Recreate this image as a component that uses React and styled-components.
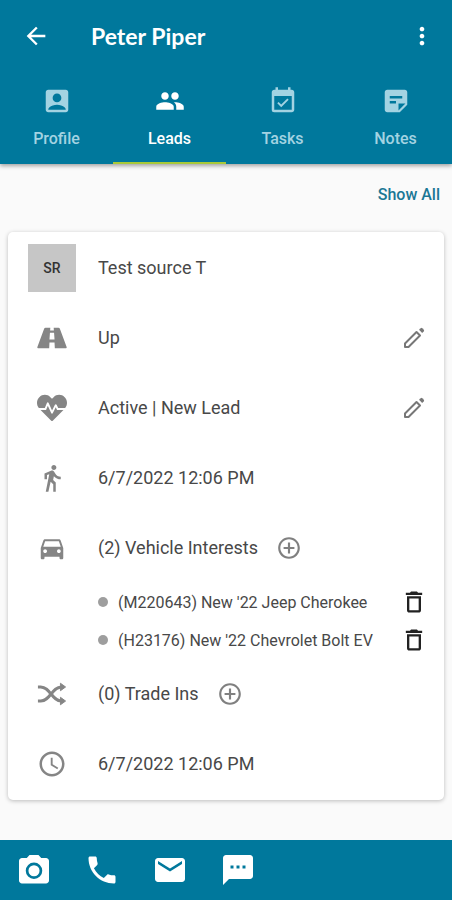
import styled, { createGlobalStyle } from 'styled-components'
import {
    MdAccessTime,
    MdAccountBox,
    MdAddCircleOutline,
    MdArrowBack,
    MdDeleteOutline,
    MdDirectionsCar,
    MdDirectionsWalk,
    MdEmail,
    MdEventAvailable,
    MdMoreVert,
    MdPeople,
    MdPhone,
    MdStickyNote2,
    MdTextsms,
} from 'react-icons/md'
import { FaHeartbeat } from 'react-icons/fa'

const GlobalStyle = createGlobalStyle`
    * {
        box-sizing: border-box;
    }

    body {
        margin: 0;
        background-color: #fafafa;
        font-family: Roboto, 'Liberation Sans', sans-serif;
        color: #484848;
    }
`;

const LeadPage = styled.div`
    min-height: 100vh;
    display: flex;
    flex-flow: column nowrap;
`;

const IconButton = styled.button`
    border: 0;
    padding: 0;
    background: none;
    display: flex;
    color: ${props => props.$color || '#ffffff'};
    font-size: ${props => props.$size || 28}px;
    cursor: pointer;
`;

// ---- Header ----

const Header = styled.header`
    background-color: #00789c;
    box-shadow: 0 2px 4px rgba(0, 0, 0, 0.35);
`;

const TitleBar = styled.div`
    height: 72px;
    padding: 0 16px 0 22px;
    display: flex;
    align-items: center;
`;

const Title = styled.h1`
    flex: 1;
    margin: 0;
    padding-left: 41px;
    font-family: Lato, sans-serif;
    font-size: 23px;
    font-weight: 700;
    color: #ffffff;
`;

const Tabs = styled.nav`
    display: flex;
`;

const Tab = styled.button`
    flex: 1;
    height: 92px;
    padding: 14px 0 0;
    border: 0;
    border-bottom: 2px solid ${props => (props.$active ? '#a9c938' : 'transparent')};
    background: none;
    display: flex;
    flex-flow: column nowrap;
    align-items: center;
    gap: 12px;
    font-family: inherit;
    font-size: 16px;
    line-height: 22px;
    font-weight: 500;
    color: ${props => (props.$active ? '#ffffff' : '#a3d3e2')};
    cursor: pointer;

    svg {
        font-size: 30px;
    }
`;

// ---- Lead card ----

const Content = styled.main`
    flex: 1;
    padding: 20px 8px 40px;
`;

const ShowAll = styled.a`
    display: block;
    width: fit-content;
    margin: 0 4px 26px auto;
    font-size: 16px;
    line-height: 22px;
    font-weight: 500;
    color: #1b7795;
    text-decoration: none;
`;

const Card = styled.section`
    padding: 1px 0;
    border-radius: 5px;
    background-color: #ffffff;
    box-shadow: 0 1px 4px rgba(0, 0, 0, 0.25);
`;

const Row = styled.div`
    height: 70px;
    padding: 0 16px 0 20px;
    display: flex;
    align-items: center;
`;

const RowIcon = styled.div`
    flex: 0 0 48px;
    display: flex;
    justify-content: center;
    color: #858585;
    font-size: 30px;
`;

const SourceBadge = styled.div`
    width: 48px;
    height: 48px;
    background-color: #c6c6c6;
    display: flex;
    justify-content: center;
    align-items: center;
    font-size: 14px;
    font-weight: 500;
    color: #333333;
`;

const RowText = styled.div`
    flex: 1;
    margin-left: 22px;
    display: flex;
    align-items: center;
    gap: 18px;
    font-size: 18px;
    line-height: 20px;
`;

const VehicleList = styled.ul`
    margin: 0;
    padding: 0 16px 0 90px;
    list-style: none;
`;

const Vehicle = styled.li`
    height: 38px;
    display: flex;
    align-items: center;
    gap: 10px;
    font-size: 16px;

    &::before {
        content: '';
        width: 10px;
        height: 10px;
        border-radius: 50%;
        background-color: #9e9e9e;
    }
`;

const VehicleName = styled.span`
    flex: 1;
`;

// ---- Footer ----

const Footer = styled.footer`
    height: 60px;
    padding: 0 16px;
    background-color: #00789c;
    display: flex;
    align-items: center;
    gap: 32px;
`;

// ---- Icons ----

const CameraIcon = () => (
    <svg width="1em" height="1em" viewBox="0 0 24 24" fill="currentColor">
        <path
            fillRule="evenodd"
            d="M9 2 7.2 4H4c-1.1 0-2 .9-2 2v13c0 1.1.9 2 2 2h16c1.1 0 2-.9 2-2V6c0-1.1-.9-2-2-2h-3.2L15 2H9zm3 5a5.5 5.5 0 1 1 0 11 5.5 5.5 0 0 1 0-11zm0 1.8a3.7 3.7 0 1 0 0 7.4 3.7 3.7 0 0 0 0-7.4z"
        />
    </svg>
)

const RoadIcon = () => (
    <svg width="1em" height="1em" viewBox="0 0 32 32" fill="currentColor">
        <path
            fillRule="evenodd"
            d="M9 5H14.2L14 8H18L17.800 5H23Q24 5 24.400 6L31.600 25.500Q32 27 30.800 27H19L18.700 20.800H13.300L13 27H1.200Q0 27 .4 25.500L7.600 6Q8 5 9 5ZM13.800 10.500 13.300 17.500H18.700L18.200 10.500Z"
        />
    </svg>
)

const ShuffleIcon = () => (
    <svg width="1em" height="1em" viewBox="0 0 32 32" fill="none">
        <path
            d="M1 8.500H4C14 8.500 16 23.500 26 23.500M1 23.500H4C14 23.500 16 8.500 26 8.500"
            stroke="currentColor"
            strokeWidth="3.2"
        />
        <path
            d="M25 4.500 30.500 8.500 25 12.500ZM25 19.500 30.500 23.500 25 27.500Z"
            fill="currentColor"
            stroke="currentColor"
            strokeWidth="1"
            strokeLinejoin="round"
        />
    </svg>
)

const PencilIcon = () => (
    <svg width="1em" height="1em" viewBox="0 0 28 28" fill="none">
        <path
            d="M5 23V19.500L16.500 8 20 11.500 8.500 23Z"
            stroke="currentColor"
            strokeWidth="2"
            strokeLinejoin="round"
        />
        <path
            d="M19 5.800 20.700 4.200Q21.500 3.500 22.300 4.200L23.800 5.700Q24.500 6.500 23.800 7.300L22.200 9Z"
            fill="currentColor"
        />
    </svg>
)

const tabs = [
    { label: 'Profile', Icon: MdAccountBox },
    { label: 'Leads', Icon: MdPeople, active: true },
    { label: 'Tasks', Icon: MdEventAvailable },
    { label: 'Notes', Icon: MdStickyNote2 },
];

const vehicles = [
    "(M220643) New '22 Jeep Cherokee",
    "(H23176) New '22 Chevrolet Bolt EV",
];

const actions = [
    { label: 'Camera', Icon: CameraIcon },
    { label: 'Call', Icon: MdPhone },
    { label: 'Email', Icon: MdEmail },
    { label: 'Text message', Icon: MdTextsms },
];

const EditButton = ({ label }) => (
    <IconButton $color="#777777" aria-label={label}>
        <PencilIcon />
    </IconButton>
)

const AddButton = ({ label }) => (
    <IconButton $color="#808080" $size={26} aria-label={label}>
        <MdAddCircleOutline />
    </IconButton>
)

export default () => (
    <LeadPage>
        <GlobalStyle />
        <Header>
            <TitleBar>
                <IconButton aria-label="Back"><MdArrowBack /></IconButton>
                <Title>Peter Piper</Title>
                <IconButton aria-label="More options"><MdMoreVert /></IconButton>
            </TitleBar>
            <Tabs>
                {tabs.map(({ label, Icon, active }) => (
                    <Tab key={label} $active={active}>
                        <Icon />
                        {label}
                    </Tab>
                ))}
            </Tabs>
        </Header>
        <Content>
            <ShowAll href="#all">Show All</ShowAll>
            <Card>
                <Row>
                    <SourceBadge>SR</SourceBadge>
                    <RowText>Test source T</RowText>
                </Row>
                <Row>
                    <RowIcon><RoadIcon /></RowIcon>
                    <RowText>Up</RowText>
                    <EditButton label="Edit lead type" />
                </Row>
                <Row>
                    <RowIcon><FaHeartbeat /></RowIcon>
                    <RowText>Active | New Lead</RowText>
                    <EditButton label="Edit status" />
                </Row>
                <Row>
                    <RowIcon><MdDirectionsWalk /></RowIcon>
                    <RowText>6/7/2022 12:06 PM</RowText>
                </Row>
                <Row>
                    <RowIcon><MdDirectionsCar /></RowIcon>
                    <RowText>
                        (2) Vehicle Interests
                        <AddButton label="Add vehicle" />
                    </RowText>
                </Row>
                <VehicleList>
                    {vehicles.map(name => (
                        <Vehicle key={name}>
                            <VehicleName>{name}</VehicleName>
                            <IconButton $color="#222222" aria-label={`Delete ${name}`}>
                                <MdDeleteOutline />
                            </IconButton>
                        </Vehicle>
                    ))}
                </VehicleList>
                <Row>
                    <RowIcon><ShuffleIcon /></RowIcon>
                    <RowText>
                        (0) Trade Ins
                        <AddButton label="Add trade in" />
                    </RowText>
                </Row>
                <Row>
                    <RowIcon><MdAccessTime /></RowIcon>
                    <RowText>6/7/2022 12:06 PM</RowText>
                </Row>
            </Card>
        </Content>
        <Footer>
            {actions.map(({ label, Icon }) => (
                <IconButton key={label} $size={36} aria-label={label}>
                    <Icon />
                </IconButton>
            ))}
        </Footer>
    </LeadPage>
)
